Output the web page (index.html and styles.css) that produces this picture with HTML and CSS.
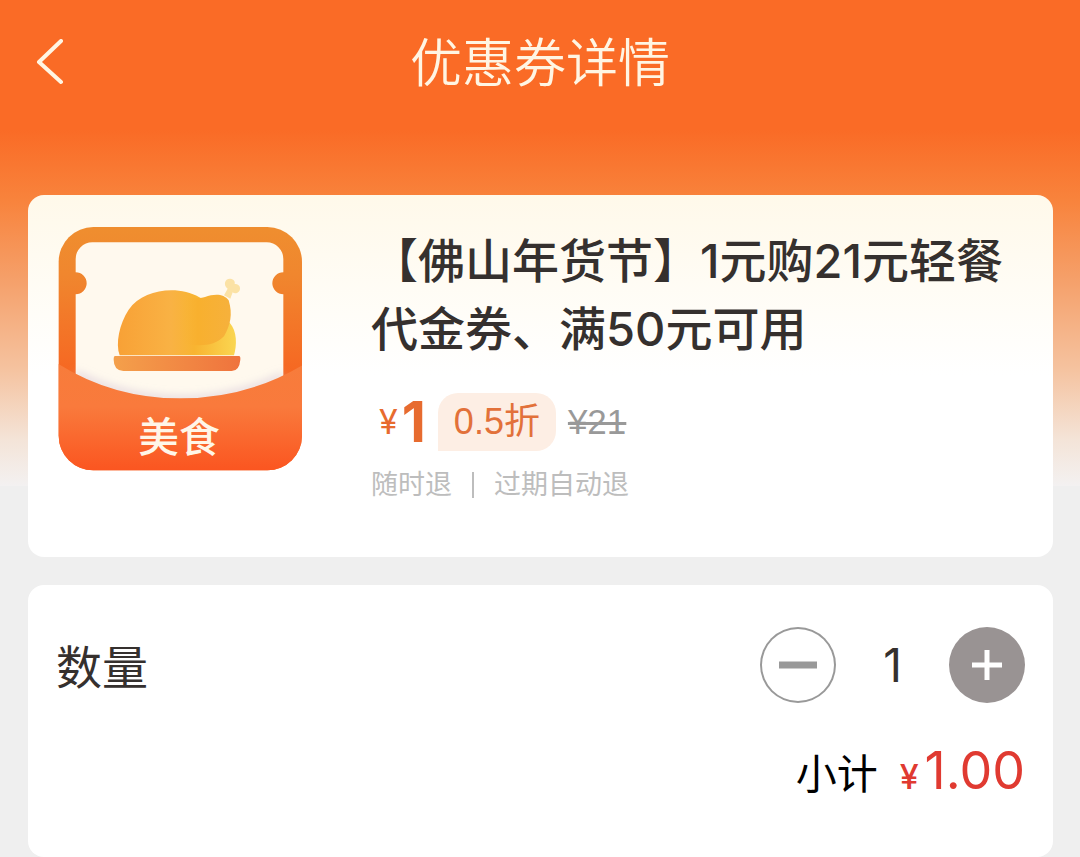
FILE: index.html
```html
<!DOCTYPE html>
<html lang="zh-CN">
<head>
<meta charset="utf-8">
<meta name="viewport" content="width=device-width, initial-scale=1">
<title>优惠券详情</title>
<link rel="stylesheet" href="styles.css">
</head>
<body>
<header class="topbar">
  <button class="back" type="button" aria-label="返回">
    <svg viewBox="0 0 28 46" width="28" height="46" fill="none" stroke="currentColor" stroke-width="4" stroke-linecap="round" stroke-linejoin="round"><path d="M25 2 3 23 25 43"/></svg>
  </button>
  <h1 class="page-title">优惠券详情</h1>
</header>
<main class="content">
  <section class="card coupon">
    <svg class="coupon-icon" viewBox="54 50 732 732" role="img" aria-label="美食">
      <defs>
        <linearGradient id="frame" x1="0" y1="0" x2="0" y2="1"><stop offset="0" stop-color="#ef8e2f"/><stop offset=".2" stop-color="#f0862e"/><stop offset=".6" stop-color="#f66722"/></linearGradient>
        <linearGradient id="pocket" x1="0" y1="0" x2="0" y2="1"><stop offset="0" stop-color="#f77c3b"/><stop offset=".4" stop-color="#f97a3c"/><stop offset="1" stop-color="#fb5520"/></linearGradient>
        <linearGradient id="body" x1="0" y1="0" x2="1" y2="0"><stop offset="0" stop-color="#f8a136"/><stop offset=".45" stop-color="#f9b244"/><stop offset=".65" stop-color="#f8b431"/><stop offset="1" stop-color="#fad651"/></linearGradient>
        <linearGradient id="leg" x1="0" y1="0" x2="1" y2="0"><stop offset="0" stop-color="#f9b43a" stop-opacity="0"/><stop offset=".35" stop-color="#f8b02e"/><stop offset="1" stop-color="#f6b13c"/></linearGradient>
        <linearGradient id="plate" x1="0" y1="0" x2="1" y2="0"><stop offset="0" stop-color="#f4a04b"/><stop offset="1" stop-color="#ef733d"/></linearGradient>
        <clipPath id="tile"><rect x="56" y="50" width="730" height="730" rx="104"/></clipPath>
        <filter id="soft" x="-20%" y="-60%" width="140%" height="220%"><feGaussianBlur stdDeviation="12"/></filter>
      </defs>
      <g clip-path="url(#tile)">
        <path fill="url(#frame)" d="M54 50h732v732H54z"/>
        <path fill="#fff9ee" d="M157 96H680A50 50 0 0 1 730 146V186A33 33 0 1 0 730 252V580H107V252A33 33 0 1 0 107 186V146A50 50 0 0 1 157 96Z"/>
        <path fill="none" stroke="#c8b7cf" stroke-opacity=".55" stroke-width="18" filter="url(#soft)" d="M107 491Q250 565 420 567Q590 565 730 496"/>
        <path fill="url(#pocket)" d="M54 460Q220 564 420 564Q620 564 788 464V782H54Z"/>
      </g>
      <path fill="url(#body)" d="M239 435C226 400 238 340 266 298C310 236 414 224 478 261C514 276 543 311 569 337C592 363 591 405 582 435Z"/>
      <path fill="url(#leg)" d="M420 262Q478 266 495 260C524 249 552 250 566 270C579 312 571 346 552 378C520 410 478 409 420 398Z"/>
      <path fill="#fbe2a5" d="M552 255 563 235C549 224 554 204 571 205C582 206 586 214 584 221C597 219 604 232 598 242C592 251 582 250 578 246L571 265Z"/>
      <path fill="url(#plate)" d="M225 437H597Q602 437 601 448Q598 482 575 482H250Q221 480 221 448Q221 437 225 437Z"/>
      <text class="icon-label" x="417" y="724" text-anchor="middle">美食</text>
    </svg>
    <div class="coupon-info">
      <h2 class="coupon-title">【佛山年货节】1元购21元轻餐代金券、满50元可用</h2>
      <div class="price-row">
        <span class="price"><span class="yen">¥</span><strong>1</strong></span>
        <span class="discount">0.5折</span>
        <s class="original">¥21</s>
      </div>
      <div class="terms"><span>随时退</span><span class="divider"></span><span>过期自动退</span></div>
    </div>
  </section>
  <section class="card order">
    <div class="quantity-row">
      <span class="quantity-label" id="qty">数量</span>
      <div class="stepper" role="group" aria-labelledby="qty">
        <button class="step minus" type="button" aria-label="减少"><svg viewBox="0 0 76 76"><path d="M19 38H57" stroke="currentColor" stroke-width="7"/></svg></button>
        <output class="count">1</output>
        <button class="step plus" type="button" aria-label="增加"><svg viewBox="0 0 76 76"><path d="M23 38H53M38 23V53" stroke="currentColor" stroke-width="5"/></svg></button>
      </div>
    </div>
    <div class="subtotal">
      <span>小计</span>
      <span class="amount"><span class="amount-yen">¥</span>1.00</span>
    </div>
  </section>
</main>
</body>
</html>
```
FILE: styles.css
```css
* { box-sizing: border-box; }

body {
  margin: 0;
  min-height: 100vh;
  display: flex;
  flex-direction: column;
  background: #efefef linear-gradient(#fa6b26 0, #fa6b26 130px, #f8833c 200px, #f5a06a 280px, #f5c3a0 370px, #f4e4d8 440px, #f3f1f1 486px) no-repeat 0 0 / 100% 486px;
  color: #35302e;
  font-family: Inter, "Noto Sans CJK SC", sans-serif;
}

button {
  padding: 0;
  border: 0;
  background: none;
  color: inherit;
  font: inherit;
}

.topbar {
  height: 124px;
  display: grid;
  grid-template-columns: 120px 1fr 120px;
  align-items: center;
  color: #fff5e3;
}

.back {
  width: 56px;
  height: 56px;
  margin-left: 22px;
  display: grid;
  place-items: center;
}

.page-title {
  margin: 0;
  padding-top: 4px;
  text-align: center;
  font-size: 52px;
  font-weight: 350;
  line-height: 76px;
}

.content {
  flex: 1;
  display: flex;
  flex-direction: column;
  gap: 28px;
  padding: 71px 27px 0 28px;
}

.card {
  border-radius: 16px;
  background: #fff;
}

.coupon {
  display: flex;
  align-items: flex-start;
  gap: 69px;
  padding: 32px 30px 52px;
  background: linear-gradient(#fff9ea, #fff 180px);
}

.coupon-icon {
  flex: none;
  width: 244px;
  height: 244px;
}

.icon-label {
  fill: #fff6e8;
  font-size: 122px;
  font-weight: 500;
}

.coupon-info {
  flex: 1;
  min-width: 0;
}

.coupon-title {
  margin: 0;
  font-size: 47px;
  font-weight: 500;
  line-height: 68px;
}

.price-row {
  display: flex;
  align-items: center;
  gap: 12px;
  margin-top: 30px;
}

.price {
  display: flex;
  align-items: center;
  gap: 4px;
  margin-left: 8px;
  color: #e76b2f;
  font-size: 56px;
  line-height: 58px;
}

.yen { font-size: 34px; }

.price strong { font-weight: 700; }

.discount {
  padding: 0 16px;
  border-radius: 20px 20px 20px 0;
  background: #fdeee4;
  color: #e2713a;
  font-family: "Liberation Sans", "Noto Sans CJK SC", sans-serif;
  font-size: 36px;
  line-height: 58px;
}

.original {
  color: #999;
  font-family: "Liberation Sans", sans-serif;
  font-size: 35px;
  line-height: 58px;
}

.terms {
  display: flex;
  align-items: center;
  gap: 20px;
  margin-top: 14px;
  color: #bdbdbd;
  font-size: 27px;
  line-height: 40px;
}

.divider {
  width: 2px;
  height: 26px;
  background: #bdbdbd;
}

.order {
  flex: 1;
  padding: 42px 28px 40px;
}

.quantity-row,
.stepper,
.subtotal {
  display: flex;
  align-items: center;
}

.quantity-row { justify-content: space-between; }

.quantity-label {
  padding-top: 4px;
  font-size: 46px;
  line-height: 72px;
}

.step {
  width: 76px;
  height: 76px;
  border-radius: 50%;
}

.step svg {
  display: block;
  width: 100%;
  height: 100%;
}

.minus {
  box-shadow: inset 0 0 0 2px #999;
  color: #999;
}

.plus {
  background: #999393;
  color: #fff;
}

.count {
  width: 113px;
  text-align: center;
  font-size: 46px;
}

.subtotal {
  justify-content: flex-end;
  align-items: baseline;
  gap: 22px;
  margin-top: 30px;
  color: #000;
  font-size: 41px;
  line-height: 76px;
}

.amount {
  color: #e03a31;
  font-size: 52px;
}

.amount-yen {
  margin-right: 6px;
  font-size: 34px;
  font-weight: 500;
}
```
